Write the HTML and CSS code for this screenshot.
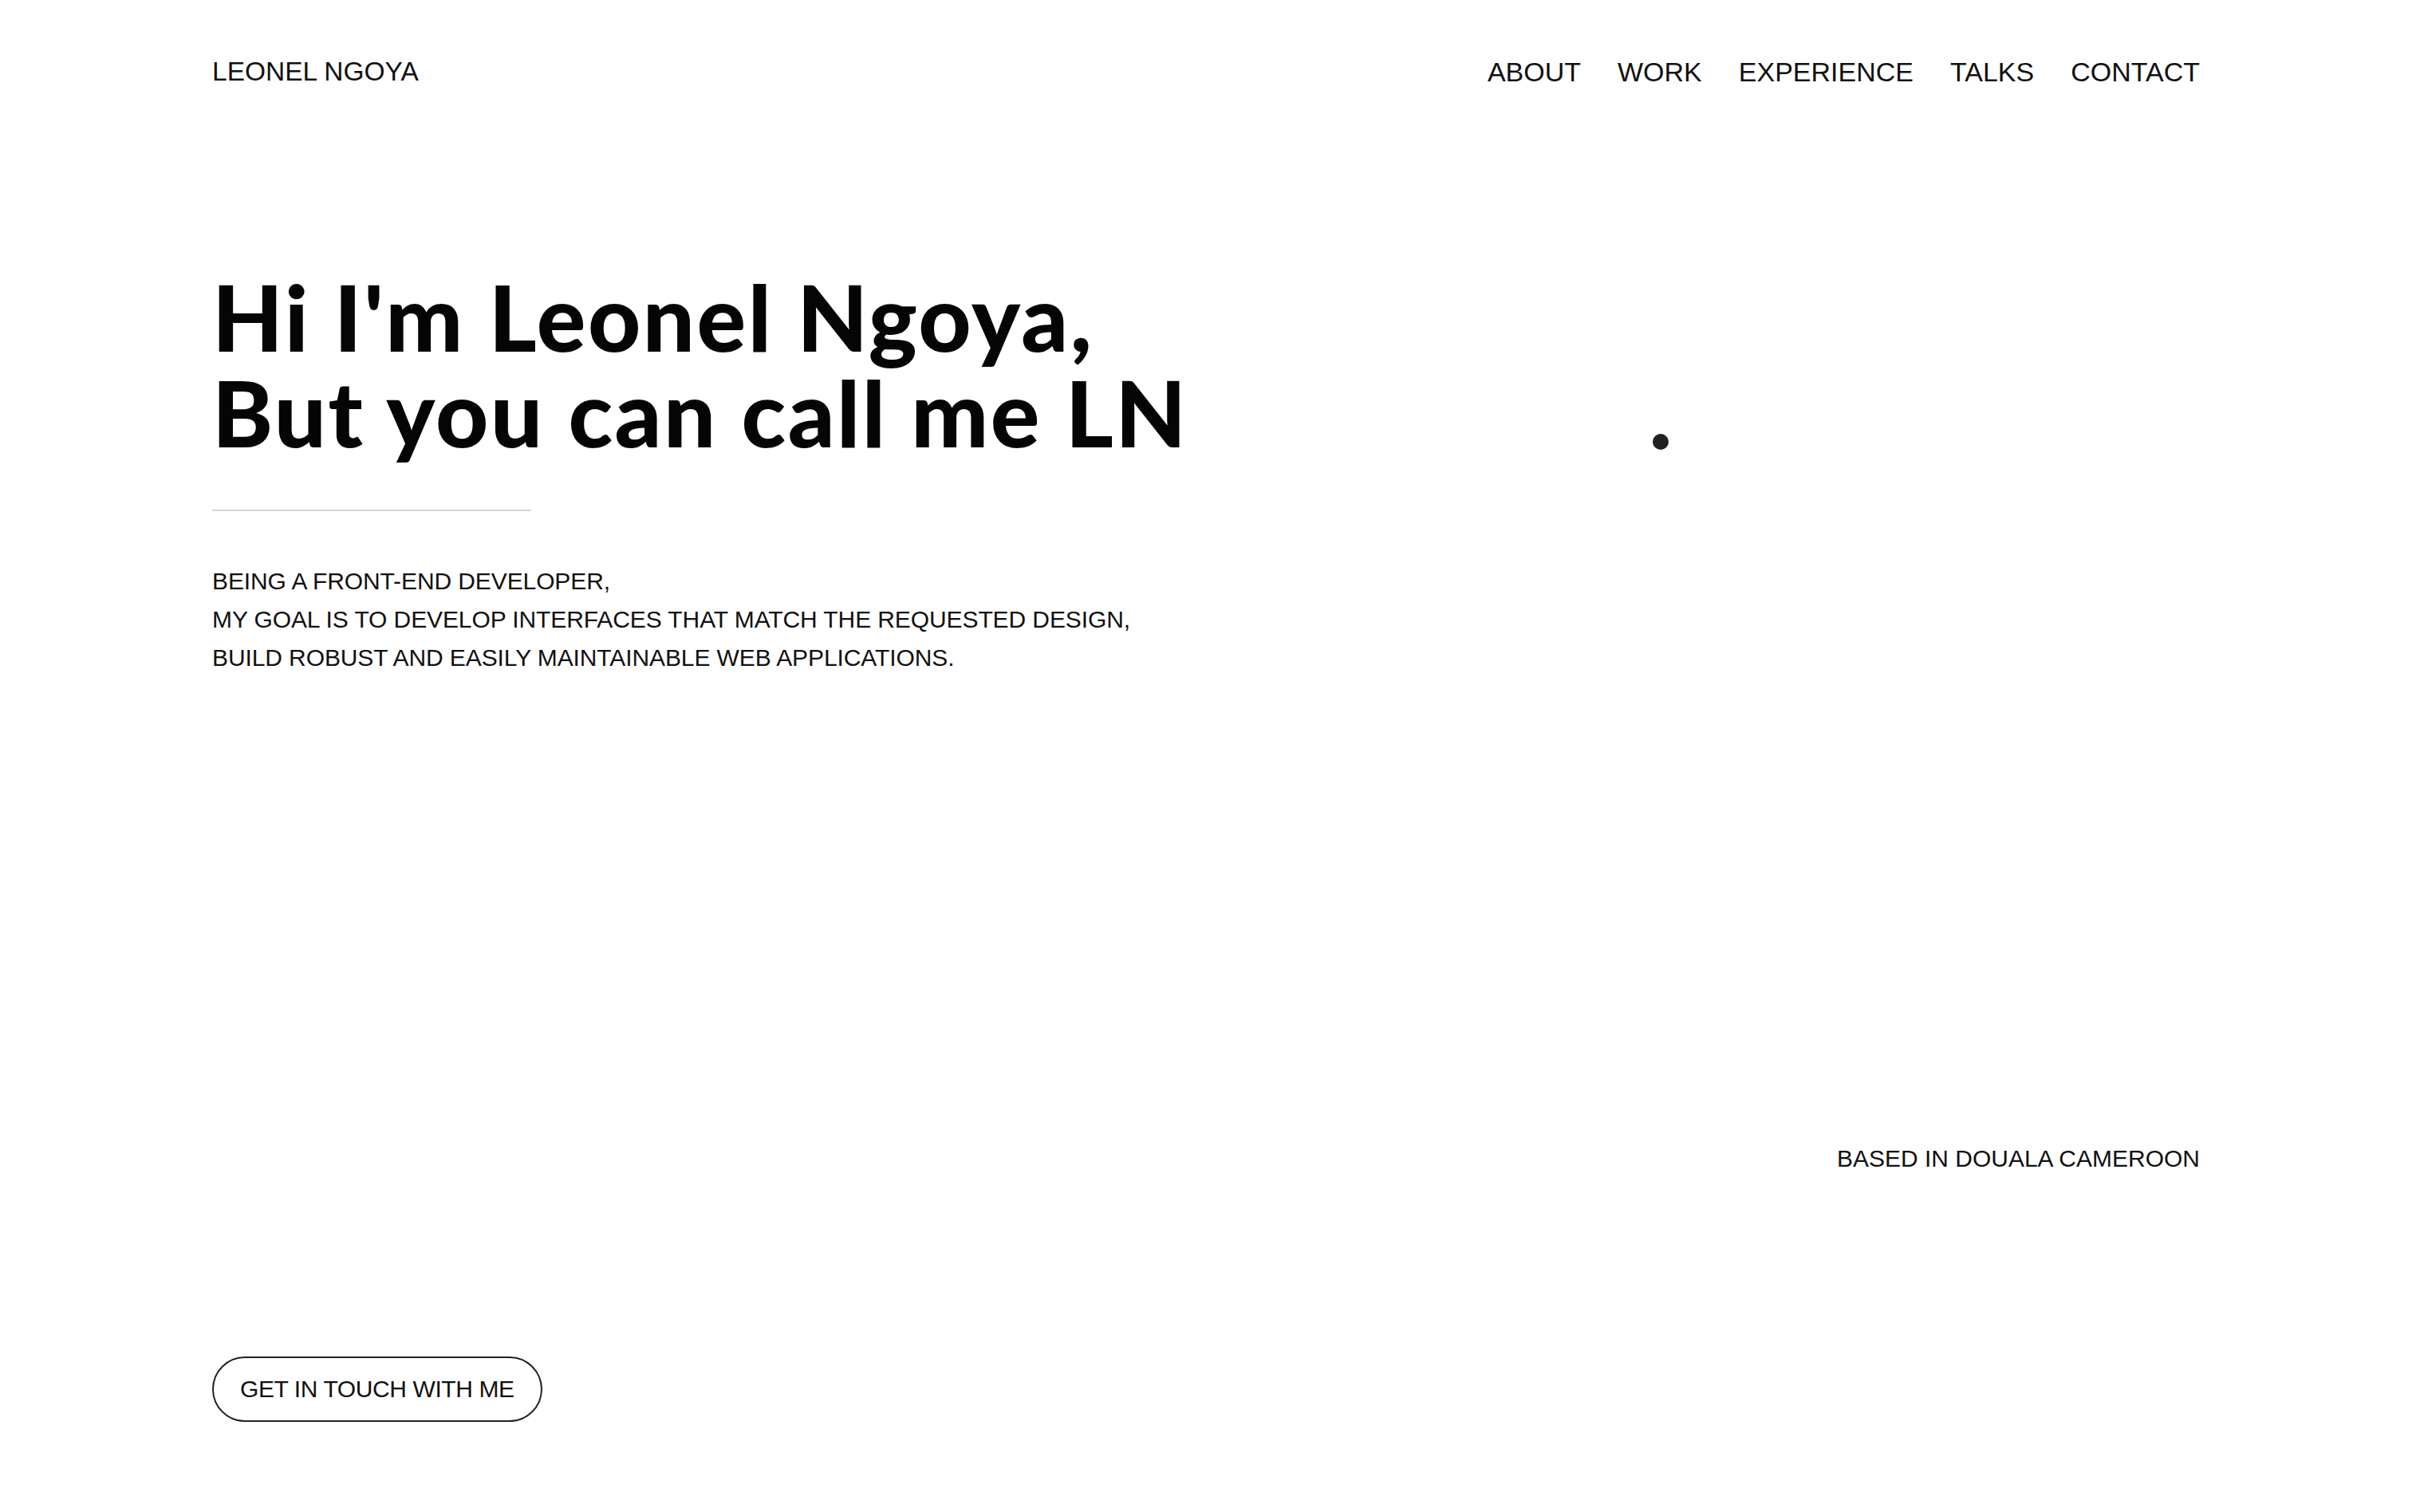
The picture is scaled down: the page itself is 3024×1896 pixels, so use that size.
FILE: index.html
```html
<!DOCTYPE html>
<html lang="en">
<head>
<meta charset="utf-8">
<title>Leonel Ngoya</title>
<link rel="stylesheet" href="styles.css">
</head>
<body>
<div class="page">
  <header class="site-header">
    <a class="logo" href="#">LEONEL NGOYA</a>
    <nav class="nav">
      <a href="#about">ABOUT</a>
      <a href="#work">WORK</a>
      <a href="#experience">EXPERIENCE</a>
      <a href="#talks">TALKS</a>
      <a href="#contact">CONTACT</a>
    </nav>
  </header>
  <main class="hero">
    <section class="hero-intro">
      <h1 class="hero-title">Hi I'm Leonel Ngoya,<br>But you can call me LN</h1>
      <hr class="hero-rule">
      <p class="hero-desc">BEING A FRONT-END DEVELOPER,<br>MY GOAL IS TO DEVELOP INTERFACES THAT MATCH THE REQUESTED DESIGN,<br>BUILD ROBUST AND EASILY MAINTAINABLE WEB APPLICATIONS.</p>
    </section>
    <p class="location">BASED IN DOUALA CAMEROON</p>
    <div class="cta-row">
      <a class="cta" href="#contact">GET IN TOUCH WITH ME</a>
    </div>
  </main>
  <span class="cursor-dot"></span>
</div>
</body>
</html>
```
FILE: styles.css
```css
* { box-sizing: border-box; }

html, body {
  margin: 0;
  padding: 0;
  background: #ffffff;
}

body {
  font-family: "Liberation Sans", Arial, sans-serif;
  color: #111111;
}

a { color: inherit; text-decoration: none; }

.page {
  position: relative;
  min-height: 1896px;
  padding: 70px 266px 0;
}

.site-header {
  display: flex;
  justify-content: space-between;
  align-items: flex-start;
}

.logo {
  font-size: 33.5px;
  line-height: 40px;
}

.nav {
  display: flex;
  gap: 46px;
  font-size: 34px;
  line-height: 40px;
}

.hero {
  display: flex;
  flex-direction: column;
}

.hero-intro {
  margin-top: 226px;
}

.hero-title {
  margin: 0;
  font-family: "Lato", "Open Sans", sans-serif;
  font-weight: 900;
  font-size: 115px;
  line-height: 120px;
  letter-spacing: 2.5px;
  color: #050505;
}

.hero-rule {
  margin: 63px 0 0;
  width: 400px;
  height: 2px;
  border: 0;
  background: #d4d4d4;
}

.hero-desc {
  margin: 64px 0 0;
  font-size: 30px;
  line-height: 48px;
  letter-spacing: -0.1px;
}

.location {
  margin: 580px 0 0;
  align-self: flex-end;
  font-size: 30px;
  line-height: 48px;
}

.cta-row {
  margin-top: 224px;
  display: flex;
}

.cta {
  display: inline-flex;
  align-items: center;
  height: 82px;
  padding: 0 33px;
  border: 2px solid #222222;
  border-radius: 41px;
  font-size: 30px;
  letter-spacing: -0.4px;
}

.cursor-dot {
  position: absolute;
  top: 544px;
  left: 2072px;
  width: 20px;
  height: 20px;
  border-radius: 50%;
  background: #222222;
}
```
